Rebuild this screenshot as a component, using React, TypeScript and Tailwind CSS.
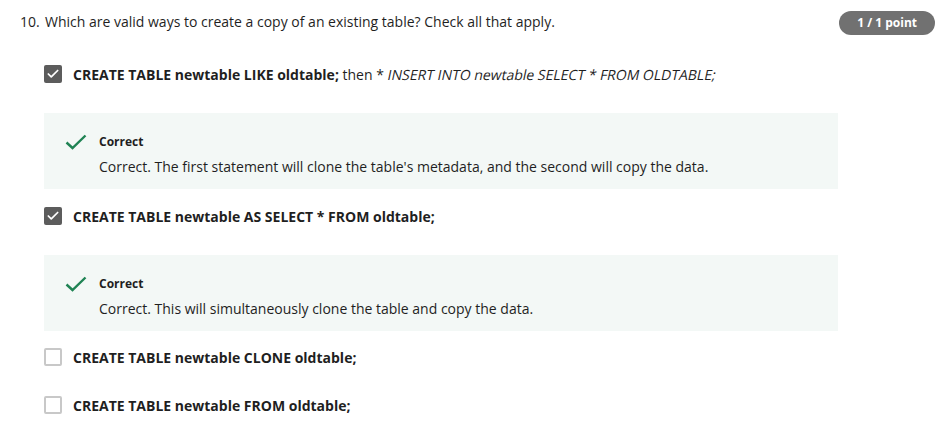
import { Check } from "lucide-react";

const font = { fontFamily: '"Open Sans", "Noto Sans", sans-serif' };

const Box = ({ checked }: { checked: boolean }) =>
  checked ? (
    <div className="w-[18px] h-[18px] rounded-[2px] bg-[#5c5c5c] flex items-center justify-center shrink-0">
      <Check className="w-[14px] h-[14px] text-white" strokeWidth={3} />
    </div>
  ) : (
    <div className="w-[18px] h-[18px] rounded-[2px] border-2 border-[#c8c8c8] bg-white shrink-0" />
  );

const Option = ({ checked, children }: { checked: boolean; children: React.ReactNode }) => (
  <div className="flex items-center h-[20px] pl-[44px]">
    <Box checked={checked} />
    <div className="ml-[11px] text-[14px] text-[#1f1f1f]">{children}</div>
  </div>
);

const Feedback = ({ text }: { text: string }) => (
  <div className="ml-[44px] w-[794px] h-[76px] bg-[#f3f8f6] pl-[21px] pt-[20px] flex">
    <svg width="22" height="16" viewBox="0 0 22 16" className="mt-[1px] shrink-0">
      <path d="M1.5 8.5 L7.5 14 L20.5 1.5" fill="none" stroke="#1f8354" strokeWidth="2.4" />
    </svg>
    <div className="ml-[12px]">
      <div className="text-[12px] font-bold leading-[16px] text-[#1f1f1f] mt-[1px]">Correct</div>
      <div className="text-[14px] leading-[20px] text-[#1f1f1f] mt-[7px]">{text}</div>
    </div>
  </div>
);

export default function App() {
  return (
    <div className="w-[952px] h-[427px] bg-white relative" style={font}>
      <div className="flex items-center justify-between pt-[8px] pl-[20px] pr-[17px]">
        <div className="text-[14px] leading-[20px] text-[#1f1f1f] flex">
          <span className="w-[25px]">10.</span>
          <span>Which are valid ways to create a copy of an existing table? Check all that apply.</span>
        </div>
        <div className="h-[24px] px-[18px] rounded-full bg-[#717171] text-white text-[12px] font-bold flex items-center mt-[3px]">
          1 / 1 point
        </div>
      </div>

      <div className="mt-[29px]">
        <Option checked>
          <span className="font-bold">CREATE TABLE newtable LIKE oldtable;</span> then *{" "}
          <span className="inline-block -skew-x-12">INSERT INTO newtable SELECT * FROM OLDTABLE;</span>
        </Option>
      </div>
      <div className="mt-[29px]">
        <Feedback text="Correct. The first statement will clone the table's metadata, and the second will copy the data." />
      </div>
      <div className="mt-[17px]">
        <Option checked>
          <span className="font-bold">CREATE TABLE newtable AS SELECT * FROM oldtable;</span>
        </Option>
      </div>
      <div className="mt-[29px]">
        <Feedback text="Correct. This will simultaneously clone the table and copy the data." />
      </div>
      <div className="mt-[16px]">
        <Option checked={false}>
          <span className="font-bold">CREATE TABLE newtable CLONE oldtable;</span>
        </Option>
      </div>
      <div className="mt-[28px]">
        <Option checked={false}>
          <span className="font-bold">CREATE TABLE newtable FROM oldtable;</span>
        </Option>
      </div>
    </div>
  );
}
